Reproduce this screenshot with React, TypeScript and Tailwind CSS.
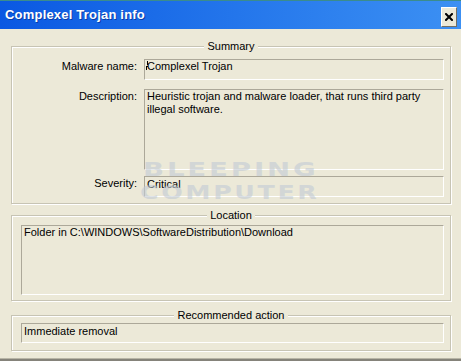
import type { ReactNode } from 'react'

function GroupBox({ title, className, children }: { title: string; className?: string; children: ReactNode }) {
  return (
    <fieldset
      className={`border border-[#c7c4b4] shadow-[1px_1px_0_#fff,inset_1px_1px_0_#fff] ${className ?? ''}`}
    >
      <legend className="mx-auto px-[3px] leading-[13px] bg-[#ece9d8]">{title}</legend>
      {children}
    </fieldset>
  )
}

// read-only edit box, sunken 1px
function Field({ className, children }: { className?: string; children?: ReactNode }) {
  return (
    <div
      className={`relative border border-t-[#aca899] border-l-[#aca899] border-b-white border-r-white px-[2px] leading-[13px] ${className ?? ''}`}
    >
      {children}
    </div>
  )
}

export default function App() {
  return (
    <div className="relative w-[461px] h-[361px] overflow-hidden bg-[#ece9d8] flex flex-col text-[11px] text-black font-['Liberation_Sans',Arial,sans-serif]">
      <div className="h-px bg-[#3b8c8c]" />

      {/* title bar */}
      <div className="h-[28px] flex items-start justify-between pl-[5px] pr-[4px] bg-gradient-to-r from-[#0a58e2] to-[#3c90f3]">
        <span className="mt-[6px] text-white font-bold text-[13px] leading-[15px] tracking-[0.2px] [text-shadow:1px_1px_0_#0a3da8]">
          Complexel Trojan info
        </span>
        <button
          type="button"
          className="mt-[6px] w-[16px] h-[20px] flex items-center justify-center bg-[#ece9d8] border border-t-white border-l-white border-b-[#716f64] border-r-[#716f64]"
        >
          <svg width="8" height="8" viewBox="0 0 8 8">
            <path d="M1 1 L7 7 M7 1 L1 7" stroke="#000" strokeWidth="2" strokeLinecap="square" />
          </svg>
        </button>
      </div>

      <div className="flex flex-col pl-[11px] pr-[10px] pt-[11px]">
        <GroupBox title="Summary">
          <div className="flex flex-col pt-[6px] pb-[6px] pr-[6px]">
            <div className="flex gap-[7px]">
              <span className="w-[125px] text-right leading-[13px] pt-[1px]">Malware name:</span>
              <Field className="flex-1 h-[21px]">
                <span className="absolute left-[2px] top-[1px] w-px h-[4px] bg-black" />
                <span className="absolute left-[1px] top-[6px] w-[2px] h-[4px] border-l border-t border-black" />
                Complexel Trojan
              </Field>
            </div>
            <div className="flex gap-[7px] mt-[9px]">
              <span className="w-[125px] text-right leading-[13px] pt-[1px]">Description:</span>
              <Field className="flex-1 h-[81px]">
                Heuristic trojan and malware loader, that runs third party
                <br />
                illegal software.
              </Field>
            </div>
            <div className="flex gap-[7px] mt-[6px]">
              <span className="w-[125px] text-right leading-[13px] pt-[1px]">Severity:</span>
              <Field className="flex-1 h-[21px] pt-[1px]">Critical</Field>
            </div>
          </div>
        </GroupBox>

        <GroupBox title="Location" className="mt-[5px]">
          <div className="pt-[3px] pb-[5px] pl-[9px] pr-[6px]">
            <Field className="h-[70px]">Folder in C:\WINDOWS\SoftwareDistribution\Download</Field>
          </div>
        </GroupBox>

        <GroupBox title="Recommended action" className="mt-[8px]">
          <div className="pt-[1px] pb-[7px] pl-[9px] pr-[6px]">
            <Field className="h-[20px] pt-[1px]">Immediate removal</Field>
          </div>
        </GroupBox>
      </div>

      <div className="mt-auto h-[3px] border-t border-[#b8b5a6] bg-[#85837a]" />

      {/* watermark */}
      <div className="pointer-events-none absolute left-[143px] top-[161px] origin-left scale-x-[1.45] text-[19px] leading-[16px] font-bold tracking-[2px] text-[#c2cbd5] opacity-60 font-['DejaVu_Sans',sans-serif]">
        BLEEPING
      </div>
      <div className="pointer-events-none absolute left-[140px] top-[184px] origin-left scale-x-[1.33] text-[19px] leading-[16px] font-bold tracking-[2px] text-[#c2cbd5] opacity-60 font-['DejaVu_Sans',sans-serif]">
        COMPUTER
      </div>
    </div>
  )
}
